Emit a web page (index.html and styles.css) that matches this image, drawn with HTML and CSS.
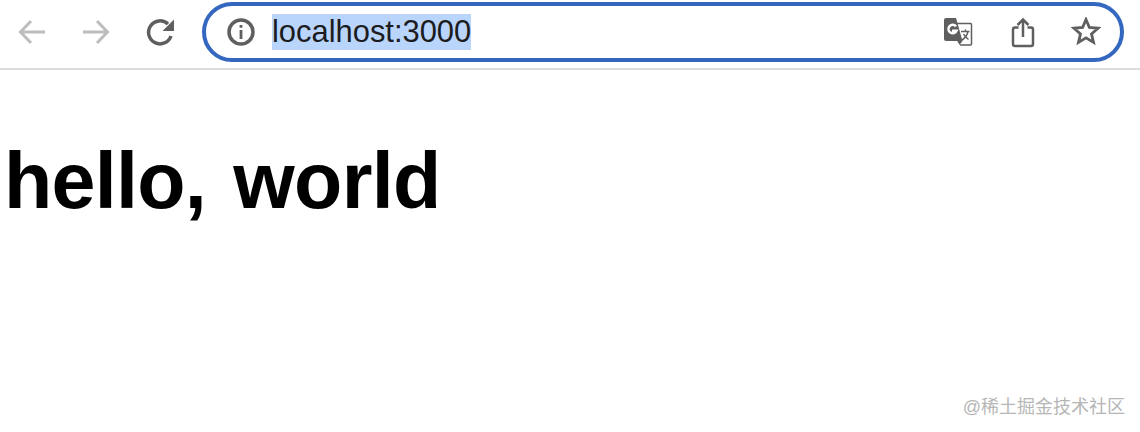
FILE: index.html
```html
<!DOCTYPE html>
<html lang="en">
<head>
    <meta charset="UTF-8">
    <meta name="viewport" content="width=device-width, initial-scale=1.0">
    <title>hello, world</title>
    <link rel="stylesheet" href="styles.css">
</head>
<body>
    <header class="toolbar">
        <button class="nav-button" aria-label="Back">
            <svg viewBox="0 0 32 32" width="32" height="32"><path d="M29 17H5M15 6 4.500 17 15 28" class="stroke-light"/></svg>
        </button>
        <button class="nav-button" aria-label="Forward">
            <svg viewBox="0 0 32 32" width="32" height="32"><path d="M3 17h24M17 6l10.500 11L17 28" class="stroke-light"/></svg>
        </button>
        <button class="nav-button" aria-label="Reload">
            <svg viewBox="0 0 32 32" width="32" height="32"><path d="M27 21A11.500 11.500 0 1 1 24 9" class="stroke-dark"/><path d="M30 4.500V16H18.500z" class="fill-dark"/></svg>
        </button>
        <div class="omnibox">
            <svg class="info-icon" viewBox="0 0 28 28" width="28" height="28"><circle cx="14" cy="14" r="12" class="stroke-dark"/><path d="M12.600 12h2.800v9h-2.800zM12.600 7h2.800v2.800h-2.800z" class="fill-dark"/></svg>
            <span class="url">localhost:3000</span>
            <div class="omnibox-actions">
                <svg class="translate-icon" viewBox="0 0 30 30" width="30" height="30"><path d="M14 6.500h13.500a1 1 0 0 1 1 1V27a1 1 0 0 1-1 1H17" class="stroke-thin"/><path d="M3 1h10l6.500 23H3a2 2 0 0 1-2-2V3a2 2 0 0 1 2-2z" class="fill-dark"/><path d="M14 23.500 16.500 28 19.500 24z" class="fill-dark"/><path d="M13 9.500a4.200 4.200 0 1 0 .5 4.200H9" class="stroke-white"/><path d="M18 14.500h8.500M22.500 12.500v2M25 14.500c-1 4-3.500 7-6 8.500M20.500 17c1 2 3 4 5 5.500" class="stroke-thin"/></svg>
                <svg viewBox="0 0 24 32" width="24" height="32"><path d="M7.500 11.500H4a2 2 0 0 0-2 2V28a2 2 0 0 0 2 2h16a2 2 0 0 0 2-2V13.500a2 2 0 0 0-2-2h-3.500" class="stroke-share"/><path d="M12 21V4M6.500 9 12 3.500 17.500 9" class="stroke-share"/></svg>
                <svg viewBox="0 1 30 30" width="30" height="30"><path d="M15 3.500l3.400 8 8.600.7-6.500 5.700 2 8.500-7.500-4.500-7.500 4.500 2-8.500L3 12.200l8.600-.7z" class="stroke-star"/></svg>
            </div>
        </div>
    </header>

    <main class="page">
        <h1>hello, world</h1>
    </main>

    <div class="watermark">@稀土掘金技术社区</div>
</body>
</html>
```

FILE: styles.css
```css
body {
    font-family: "Liberation Sans", Arial, sans-serif;
    background-color: #fff;
    color: #000;
    margin: 0;
    height: 432px;
    overflow: hidden;
    position: relative;
}

.toolbar {
    display: flex;
    align-items: flex-start;
    height: 70px;
    padding: 2px 16px 0 16px;
    border-bottom: 2px solid #dcdcdc;
    box-sizing: border-box;
}

.nav-button {
    width: 32px;
    height: 32px;
    margin: 13px 32px 0 0;
    padding: 0;
    border: none;
    background: none;
}

.nav-button:nth-child(3) {
    margin-right: 26px;
}

.stroke-light {
    fill: none;
    stroke: #bdbdbd;
    stroke-width: 3;
}

.stroke-dark {
    fill: none;
    stroke: #5f5f5f;
    stroke-width: 3.500;
}

.stroke-star {
    fill: none;
    stroke: #5f5f5f;
    stroke-width: 2.800;
}

.fill-dark {
    fill: #5f5f5f;
}

.stroke-thin {
    fill: none;
    stroke: #5f5f5f;
    stroke-width: 1.500;
}

.stroke-white {
    fill: none;
    stroke: #fff;
    stroke-width: 2.500;
}

.stroke-share {
    fill: none;
    stroke: #5f5f5f;
    stroke-width: 2.500;
}

.omnibox {
    flex: 1;
    display: flex;
    align-items: center;
    height: 60px;
    padding: 0 19px 0 21px;
    box-sizing: border-box;
    border: 4px solid #3367c0;
    border-radius: 30px;
}

.info-icon {
    flex: none;
    margin-right: 17px;
}

.url {
    font-size: 30.900px;
    line-height: 36px;
    color: #1c1c20;
    background-color: #b9d5fb;
}

.omnibox-actions {
    margin-left: auto;
    display: flex;
    align-items: center;
    gap: 36px;
}

.translate-icon {
    margin-right: 2px;
}

h1 {
    margin: 65px 0 0 4px;
    font-size: 79px;
    line-height: 92px;
    letter-spacing: -0.700px;
    word-spacing: 6px;
    font-weight: bold;
}

.watermark {
    position: absolute;
    right: 15px;
    bottom: 13px;
    font-family: "Liberation Sans", "Noto Sans CJK SC", sans-serif;
    font-size: 18px;
    line-height: 24px;
    color: #b6b6b6;
}
```
